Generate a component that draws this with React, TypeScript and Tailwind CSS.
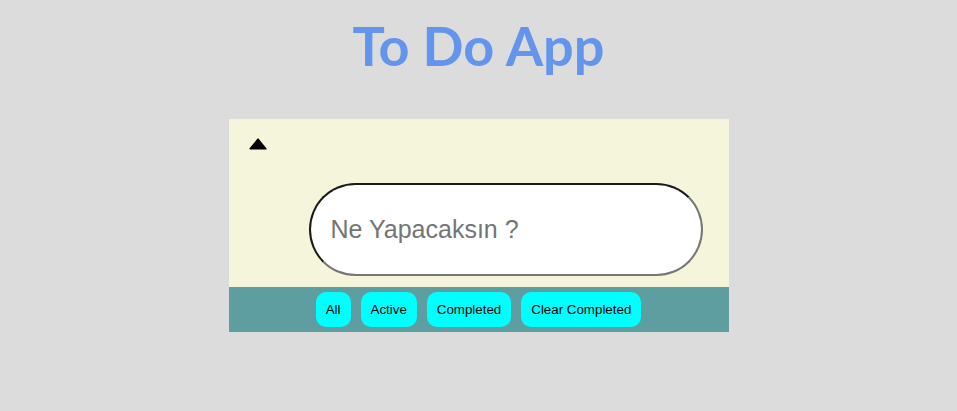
export default function App() {
  const filters = ['All', 'Active', 'Completed', 'Clear Completed'];

  return (
    <div className="min-h-screen bg-[#dcdcdc] pt-[14px]">
      <h1 className="text-center font-['Lato',sans-serif] text-[54px] font-bold leading-[1.2] text-[#6495ed]">
        To Do App
      </h1>

      <div className="mx-auto mt-[40px] w-[500px]">
        <div className="bg-[#f5f5dc] pb-[11px] pl-[20px] pt-[19px]">
          <svg width="18" height="12" viewBox="0 0 18 12" className="block">
            <path
              d="M9 1.2 L16.8 10.8 L1.2 10.8 Z"
              fill="#000"
              stroke="#000"
              strokeWidth="1.6"
              strokeLinejoin="round"
            />
          </svg>
          <input
            type="text"
            placeholder="Ne Yapacaksın ?"
            className="ml-[60px] mt-[33px] block h-[93px] w-[394px] rounded-full border-2 border-b-[#767676] border-l-[#1a1a1a] border-r-[#767676] border-t-[#1a1a1a] bg-white pl-[20px] font-['Liberation_Sans',Arial,sans-serif] text-[25px] text-black outline-none placeholder:text-[#757575]"
          />
        </div>

        <div className="flex justify-center gap-[10px] bg-[#5f9ea0] py-[5px]">
          {filters.map((f) => (
            <button
              key={f}
              className="rounded-[10px] bg-[#00ffff] p-[10px] font-['Liberation_Sans',Arial,sans-serif] text-[13.33px] leading-[15px] text-black"
            >
              {f}
            </button>
          ))}
        </div>
      </div>
    </div>
  );
}
